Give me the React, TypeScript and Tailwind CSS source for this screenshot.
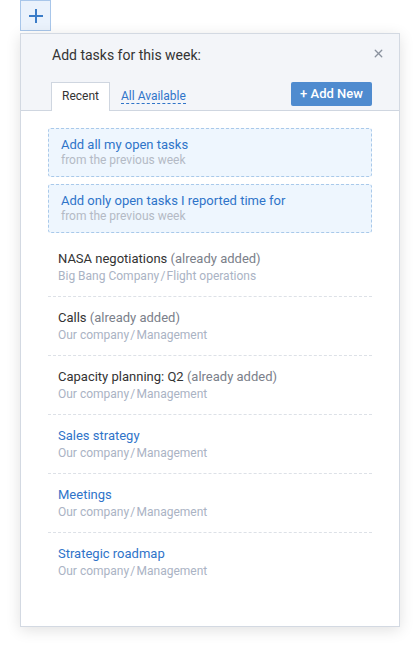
import { X } from "lucide-react";

const tasks = [
  { title: "NASA negotiations", added: true, path: "Big Bang Company\u200A/\u200AFlight operations" },
  { title: "Calls", added: true, path: "Our company\u200A/\u200AManagement" },
  { title: "Capacity planning: Q2", added: true, path: "Our company\u200A/\u200AManagement" },
  { title: "Sales strategy", added: false, path: "Our company\u200A/\u200AManagement" },
  { title: "Meetings", added: false, path: "Our company\u200A/\u200AManagement" },
  { title: "Strategic roadmap", added: false, path: "Our company\u200A/\u200AManagement" },
];

function Shortcut({ title }: { title: string }) {
  return (
    <div className="rounded-[3px] border border-dashed border-[#a9c9ea] bg-[#eef6fe] px-3 pt-[7px] h-[49px]">
      <div className="text-[13px] leading-[17px] text-[#2f74c9]">{title}</div>
      <div className="text-[12px] leading-[15px] text-[#b4bac5]">from the previous week</div>
    </div>
  );
}

export default function App() {
  return (
    <div className="min-h-[647px] bg-white font-['Roboto',sans-serif]">
      <div className="pl-5">
        <button className="flex h-[31px] w-[31px] items-center justify-center border border-[#a8c6ea] bg-[#eaf2fc] text-[#3a7cc8]">
          <svg width="14" height="14" viewBox="0 0 14 14">
            <path d="M7 0v14M0 7h14" stroke="currentColor" strokeWidth="2" />
          </svg>
        </button>
      </div>
      <div className="ml-5 mt-[2px] w-[380px] h-[594px] border border-[#d3d9e2] bg-white shadow-[0_3px_14px_rgba(0,0,0,0.12)]">
        <div className="relative bg-[#f3f5f9] border-b border-[#cfd6e0] h-[77px]">
          <div className="absolute left-[31px] top-[11px] text-[14px] text-[#333]">Add tasks for this week:</div>
          <X className="absolute right-[14px] top-[13px] text-[#8a929e]" size={13} strokeWidth={2.5} />
          <div className="absolute left-[30px] bottom-[-1px] flex items-end">
            <div className="h-[29px] w-[59px] border border-b-0 border-[#cfd6e0] bg-white text-center text-[12px] leading-[26px] text-[#333]">
              Recent
            </div>
            <div className="ml-[11px] mb-[7px] text-[12px] leading-[14px] text-[#2f74c9] border-b border-dashed border-[#2f74c9]">
              All Available
            </div>
          </div>
          <button className="absolute right-[27px] top-[48px] h-[24px] w-[81px] rounded-[2px] bg-[#4f8bcf] text-[13px] font-medium text-white">
            + Add New
          </button>
        </div>
        <div className="px-[27px] pt-[17px]">
          <div className="flex flex-col gap-[7px]">
            <Shortcut title="Add all my open tasks" />
            <Shortcut title="Add only open tasks I reported time for" />
          </div>
          <div className="mt-[5px]">
            {tasks.map((t, i) => (
              <div
                key={t.title}
                className={`px-[10px] pt-[11px] h-[59px] ${i < tasks.length - 1 ? "border-b border-dashed border-[#dde1e7]" : ""}`}
              >
                <div className={`text-[13px] leading-[19px] ${t.added ? "text-[#333]" : "text-[#2f74c9]"}`}>
                  {t.title}
                  {t.added && <span className="text-[#7b808a]"> (already added)</span>}
                </div>
                <div className="text-[12px] leading-[16px] text-[#aab3c4]">{t.path}</div>
              </div>
            ))}
          </div>
        </div>
      </div>
    </div>
  );
}
